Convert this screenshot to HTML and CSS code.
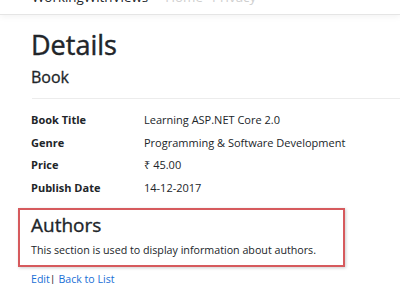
FILE: index.html
```html
<!DOCTYPE html>
<html lang="en">
<head>
    <meta charset="UTF-8">
    <title>Details - WorkingWithViews</title>
    <link rel="stylesheet" href="styles.css">
</head>
<body>

    <header class="navbar">
        <a class="brand" href="#">WorkingWithViews</a>
        <nav class="nav-links">
            <a href="#">Home</a>
            <a href="#">Privacy</a>
        </nav>
    </header>

    <main class="container">
        <h1>Details</h1>

        <div class="book">
            <h4>Book</h4>
            <hr>
            <dl class="details">
                <dt>Book Title</dt>
                <dd>Learning ASP.NET Core 2.0</dd>
                <dt>Genre</dt>
                <dd>Programming &amp; Software Development</dd>
                <dt>Price</dt>
                <dd>₹ 45.00</dd>
                <dt>Publish Date</dt>
                <dd>14-12-2017</dd>
            </dl>
        </div>

        <!-- Authors section -->
        <section class="authors">
            <h3>Authors</h3>
            <p>This section is used to display information about authors.</p>
        </section>

        <div class="actions">
            <a href="#">Edit</a>| <a href="#">Back to List</a>
        </div>
    </main>

</body>
</html>
```
FILE: styles.css
```css
body {
    margin: 0;
    font-family: 'Open Sans', 'Noto Sans', sans-serif;
    color: #212529;
    background: #fff;
    overflow: hidden;
}

a {
    color: #1a6fd6;
    text-decoration: none;
}

.navbar {
    display: flex;
    align-items: flex-end;
    gap: 17px;
    height: 15px;
    padding: 0 32px 10px;
    box-sizing: border-box;
    overflow: hidden;
    border-bottom: 1px solid #e5e5e5;
    box-shadow: 0 2px 6px rgba(0, 0, 0, 0.05);
    font-size: 13.4px;
    line-height: 14px;
}

.navbar .brand {
    color: #212529;
}

.nav-links {
    display: flex;
    gap: 9px;
}

.nav-links a {
    color: #cfcfcf;
}

.container {
    padding: 0 32px 0 31px;
}

/* headings are a touch heavier than regular in the original */
h1, h4, .authors h3 {
    font-weight: 400;
    -webkit-text-stroke: 0.45px #212529;
}

h1 {
    font-size: 27px;
    line-height: 32px;
    margin: 14px 0 0;
}

h4 {
    font-size: 16px;
    line-height: 20px;
    margin: 6px 0 0;
    -webkit-text-stroke-width: 0.3px;
}

hr {
    border: 0;
    border-top: 1px solid #ececec;
    margin: 11px -32px 0 1px;
}

.details {
    display: grid;
    grid-template-columns: 113px 1fr;
    margin: 10px 0 0;
    font-size: 11px;
    line-height: 22.5px;
}

.details dt {
    font-weight: 700;
}

.details dd {
    margin: 0;
}

.authors {
    margin: 9px 23px 0 -13px;
    padding: 4px 11px 7px;
    border: 2px solid #d65a5d;
    box-shadow: 1px 1px 3px rgba(0, 0, 0, 0.2);
}

.authors h3 {
    font-size: 19px;
    line-height: 22px;
    margin: 0 0 6px;
    -webkit-text-stroke-width: 0.35px;
}

.authors p {
    font-size: 10.7px;
    line-height: 16px;
    margin: 0;
}

.actions {
    margin-top: 4px;
    font-size: 10.6px;
    line-height: 16px;
    color: #212529;
}
```
